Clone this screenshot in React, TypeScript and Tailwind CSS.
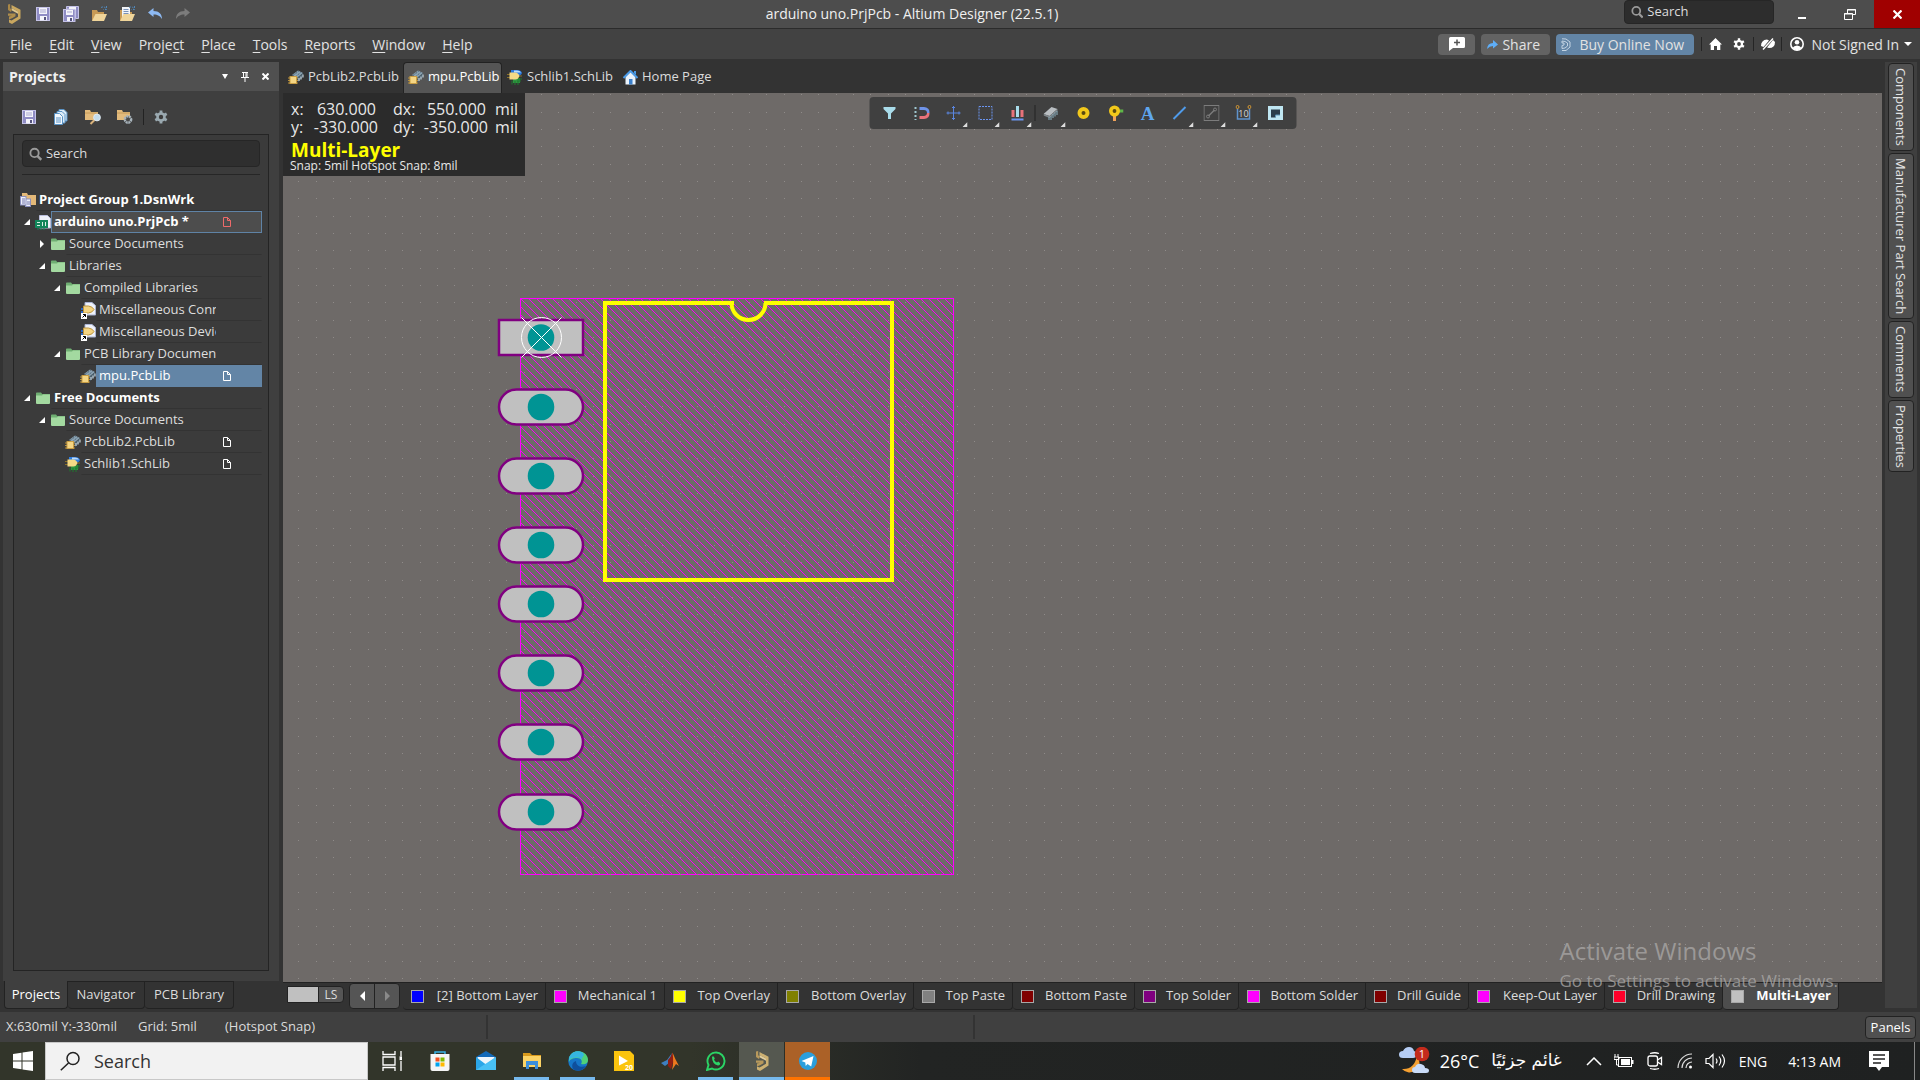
import React from "react";
import clsx from "clsx";

type P = { className?: string };

const AltiumLogo = ({ className }: P) => (
  <svg viewBox="0 0 14 20" className={className} fill="none">
    <path d="M1 .5 3.200 0v4.200L5 5.500 4 8 1 6z" fill="#a98747" />
    <path d="M4.500 1 13.500 5.800V14.500L5 20 2 18.500V15.500l2.500 1L11 12.800V7.500L4.500 4z" fill="#c9a75f" />
    <path d="M4.500 4 11 7.500v2.300L5 6.500z" fill="#dfc68d" />
    <path d="M1 9.500h7.500v2.800L5.500 14 2 15.500v-3l3-.8H1z" fill="#b08e4c" />
  </svg>
);
const Floppy = ({ className }: P) => (
  <svg viewBox="0 0 14 14" className={className}>
    <rect x=".5" y=".5" width="13" height="13" fill="#8f8cc4" stroke="#c4c2e6" />
    <rect x="3" y="1" width="8" height="6" fill="#f4f4fa" />
    <path d="M4 3h6M4 5h6" stroke="#a9a7cf" />
    <rect x="4" y="9" width="7" height="4.500" fill="#f4f4fa" />
    <rect x="8" y="10" width="2" height="3" fill="#55537c" />
  </svg>
);
const FloppyAll = ({ className }: P) => (
  <svg viewBox="0 0 16 16" className={className}>
    <path d="M3.500.5h12v12h-3V3h-9z" fill="#8f8cc4" stroke="#c4c2e6" />
    <path d="M6 1h7v3H6z" fill="#f4f4fa" />
    <rect x=".5" y="3.500" width="11.500" height="12" fill="#8f8cc4" stroke="#c4c2e6" />
    <rect x="3" y="4" width="7" height="5" fill="#f4f4fa" />
    <path d="M4 6h5" stroke="#a9a7cf" />
    <rect x="4" y="11" width="6" height="4" fill="#f4f4fa" />
    <rect x="7" y="12" width="2" height="3" fill="#55537c" />
  </svg>
);
const OpenFolder = ({ className, doc }: P & { doc?: boolean }) => (
  <svg viewBox="0 0 17 16" className={className}>
    <path d="M1 15V4h5l1 2h6v3" fill="#c89a55" />
    {doc && <path d="M3 1h8v10H3z" fill="#f2f4f8" />}
    {doc && <path d="M4.500 3.500h5M4.500 5.500h5M4.500 7.500h5" stroke="#7a92b8" />}
    <path d="M1 15 4.500 8H16l-3 7z" fill="#f0d59a" />
    <path d="M10 1.500q3-1.500 5 1M15.500 0v3.500h-3" fill="none" stroke="#4f86b8" strokeDasharray="2 1" />
  </svg>
);
const Undo = ({ className }: P) => (
  <svg viewBox="0 0 15 12" className={className}>
    <path d="M0 4.500 5.500 0V3C11 3 14 6 14 11 12 8 10 6.500 5.500 6.500V9z" fill="#8db9f2" />
  </svg>
);
const Redo = ({ className }: P) => (
  <svg viewBox="0 0 15 12" className={className}>
    <path d="M15 4.500 9.500 0V3C4 3 1 6 1 11 3 8 5 6.500 9.500 6.500V9z" fill="#7c7c7c" />
  </svg>
);
const DocsIcon = ({ className }: P) => (
  <svg viewBox="0 0 14 16" className={className}>
    <path d="M5 .5h5l3 3V12H5z" fill="#dcecf8" stroke="#5b94c6" />
    <path d="M3 2.500h5l3 3V14H3z" fill="#dcecf8" stroke="#5b94c6" />
    <path d="M.5 4.500h5l3 3V15.500h-8z" fill="#f3f8fd" stroke="#5b94c6" />
    <path d="M2 9h5M2 11h5M2 13h5" stroke="#5b94c6" />
  </svg>
);
const FolderTool = ({ className, gear }: P & { gear?: boolean }) => (
  <svg viewBox="0 0 16 16" className={className}>
    <path d="M0 1h5l1 2h7v8H0z" fill="#e3bb7c" />
    <path d="M0 4h13" stroke="#c59a58" />
    {gear ? (
      <circle cx="11" cy="10.500" r="3.200" fill="#4a4a4a" stroke="#a8b4bc" strokeWidth="2.400" strokeDasharray="2 .6" />
    ) : (
      <>
        <path d="m9.500 11-4 4" stroke="#d9b27b" strokeWidth="2" />
        <circle cx="12" cy="8.500" r="3.400" fill="#c4dcec" stroke="#dfeaf2" />
      </>
    )}
  </svg>
);
const Gear = ({ className, color = "#9aa9b0", hole = "#3c3c3c" }: P & { color?: string; hole?: string }) => (
  <svg viewBox="0 0 14 14" className={className}>
    <g stroke={color} strokeWidth="2.800">
      <path d="M7 .4v13.200M1.300 3.700l11.400 6.600M12.700 3.700 1.300 10.300" />
    </g>
    <circle cx="7" cy="7" r="4.800" fill={color} />
    <circle cx="7" cy="7" r="2.200" fill={hole} />
  </svg>
);
const Magnifier = ({ className, color = "#9a9a9a" }: P & { color?: string }) => (
  <svg viewBox="0 0 14 14" className={className} fill="none" stroke={color} strokeWidth="2">
    <circle cx="6" cy="5.800" r="4.500" />
    <path d="m9 9 4.300 4.300" strokeWidth="2.600" />
  </svg>
);
const PcbLib = ({ className }: P) => (
  <svg viewBox="0 0 16 14" className={className}>
    <path d="m4 5 6-4.500 5 2.500-6 5z" fill="#8ba3b3" />
    <path d="M5 5.500 11 1M7 7l6-4.800" stroke="#3f5564" strokeDasharray="1 1" />
    <path d="m9 8 6-5v4l-5 5z" fill="#4c6270" />
    <path d="M11 8v3M13 6.500v3M15 4.500v3" stroke="#dfe9ee" />
    <path d="M0 8h10M0 10.500h10M0 13h10" stroke="#b98e39" />
    <rect x="2" y="6.500" width="6.500" height="7" fill="#f4d583" stroke="#c89d44" />
  </svg>
);
const SchLib = ({ className }: P) => (
  <svg viewBox="0 0 16 16" className={className}>
    <path d="M4 1h6q4 0 5 3-1 3-5 3H4z" fill="#2c7be0" />
    <path d="M7 1.500h3q3 0 4 2H7z" fill="#b9dcff" />
    <rect x="6" y="9" width="7" height="5" fill="#2f9440" />
    <path d="M5 15.500v-4M8 16v-4M11 16v-4M14 12h-4M15 10h-4" stroke="#1f7a2f" />
    <path d="M0 5.500h4M0 8.500h4M10 7h5" stroke="#8b7128" />
    <path d="M2.500 3.500h6q2.500 0 4 3.500-1.500 3.500-4 3.500h-6z" fill="#f5da86" />
  </svg>
);
const HomeDoc = ({ className }: P) => (
  <svg viewBox="0 0 15 15" className={className}>
    <path d="M2.500 7v7.500h10V7L7.500 2z" fill="#e9f3fc" />
    <path d="M.5 8 7.500 1l7 7" fill="none" stroke="#4a9be8" strokeWidth="2" />
    <path d="M11 1h2v4l-2-2z" fill="#4a9be8" />
    <rect x="6" y="9" width="3.500" height="5.500" fill="#3a80cc" />
  </svg>
);
const Folder = ({ className }: P) => (
  <svg viewBox="0 0 14 12" className={className}>
    <path d="M0 2.500V1.200Q0 .5.800.5H5l1.200 1.500H14V4H0z" fill="#6fae72" />
    <path d="M0 3.500h6l1-1h7V11q0 1-1 1H1q-1 0-1-1z" fill="#a3d9a0" />
  </svg>
);
const GroupIcon = ({ className }: P) => (
  <svg viewBox="0 0 16 14" className={className}>
    <path d="M2 0h5l1 2h8v10H2z" fill="#e3b878" />
    <rect x="5.500" y="6" width="5" height="7.500" fill="#eef0fa" stroke="#8a8fbe" />
    <rect x=".5" y="3.500" width="5.500" height="8.500" fill="#eef0fa" stroke="#8a8fbe" />
    <path d="M2 6h3M2 8h3M2 10h3M7 9h3M7 11h3" stroke="#7478ad" />
  </svg>
);
const PrjIcon = ({ className }: P) => (
  <svg viewBox="0 0 16 15" className={className}>
    <path d="M4.500.5h8l3 3V13h-11z" fill="#eef0f8" stroke="#b9bddb" />
    <rect x="0" y="5" width="13" height="8" fill="#11865a" />
    <path d="M2 7.500h3M2 10.500h3M7.500 7v4M10.500 7v4" stroke="#d8f0e4" />
    <path d="M3 13v2M6 13v2M9 13v2" stroke="#11865a" />
  </svg>
);
const LinkLib = ({ className }: P) => (
  <svg viewBox="0 0 16 17" className={className}>
    <path d="M5 .5h7l3.500 3V13H5z" fill="#eef2fa" stroke="#aab4d4" />
    <path d="M1 7h3M1 10h3" stroke="#2c67c6" strokeWidth="2" />
    <path d="M3.500 4h5q4 .5 5.500 3.500-1.500 3-5.500 3.500h-5z" fill="#f4d583" stroke="#bd953f" />
    <rect x="1" y="11" width="6" height="6" fill="#fff" />
    <path d="m2.500 15.500 3-3M3 12.500h2.500V15" fill="none" stroke="#000" />
  </svg>
);
const PageMark = ({ className }: P) => (
  <svg viewBox="0 0 8 10" className={className} fill="none" stroke="currentColor">
    <path d="M.5.5h4l3 3v6h-7zM4.500.5v3h3" />
  </svg>
);

function Key({ text }: { text: string }) {
  const [a, k, b] = text.split("|");
  return (
    <>
      {a}
      <span className="underline underline-offset-2">{k}</span>
      {b}
    </>
  );
}

const menus = ["|F|ile", "|E|dit", "|V|iew", "Proje|c|t", "|P|lace", "|T|ools", "|R|eports", "|W|indow", "|H|elp"];

function TitleBar() {
  return (
    <header className="grid h-[29px] shrink-0 grid-cols-[1fr_auto_1fr] border-b border-[#2b2b2b] bg-[#4d4d4d]">
      <div className="flex items-center pl-[7px]">
        <AltiumLogo className="h-5 w-[14px]" />
        <button aria-label="Save" className="ml-[15px]"><Floppy className="size-[14px]" /></button>
        <button aria-label="Save all" className="ml-[13px]"><FloppyAll className="size-4" /></button>
        <button aria-label="Open" className="ml-3"><OpenFolder className="h-4 w-[17px]" /></button>
        <button aria-label="Open project" className="ml-[11px]"><OpenFolder doc className="h-4 w-[17px]" /></button>
        <button aria-label="Undo" className="ml-3"><Undo className="h-3 w-[15px]" /></button>
        <button aria-label="Redo" className="ml-3"><Redo className="h-3 w-[15px]" /></button>
      </div>
      <h1 className="mr-24 text-[14px] leading-7 text-[#f0f0f0]">arduino uno.PrjPcb - Altium Designer (22.5.1)</h1>
      <div className="flex items-start justify-end">
        <label className="mr-5 flex h-6 w-[150px] items-center gap-1 rounded border border-[#262626] bg-[#2d2d2d] px-1.5">
          <Magnifier className="size-[14px]" />
          <input aria-label="Search" placeholder="Search" className="w-full min-w-0 bg-transparent text-[13px] text-white outline-none placeholder:text-[#dcdcdc]" />
        </label>
        <button aria-label="Minimize" className="flex h-7 w-4 items-center justify-center"><span className="mt-2 h-0.5 w-2 bg-white" /></button>
        <button aria-label="Restore" className="ml-7 flex h-7 w-6 items-center justify-center">
          <svg viewBox="0 0 12 11" className="h-[11px] w-3" fill="none" stroke="#fff"><path d="M3.500 4V.5h8v5h-3M3 1h9" /><path d="M.5 4.500h8v6h-8zM0 5h9" /></svg>
        </button>
        <button aria-label="Close" className="ml-3 flex h-7 w-[46px] items-center justify-center bg-[#a00000]">
          <svg viewBox="0 0 9 9" className="size-[9px]" stroke="#fff" strokeWidth="2.200"><path d="m.5.5 8 8M8.500.5l-8 8" /></svg>
        </button>
      </div>
    </header>
  );
}

function MenuBar() {
  return (
    <div className="flex h-[30px] shrink-0 items-center justify-between bg-[#424242] text-[14px] text-[#e2e2e2]">
      <nav className="flex gap-[17px] pl-[10px]">
        {menus.map((m) => (
          <button key={m}><Key text={m} /></button>
        ))}
      </nav>
      <div className="flex items-center pr-2">
        <button aria-label="Feedback" className="flex h-[21px] w-[37px] items-center justify-center rounded-sm bg-[#636363]">
          <svg viewBox="0 0 16 14" className="h-[14px] w-4"><path d="M1.500 0h13q1.500 0 1.500 1.500v8q0 1.500-1.500 1.500H4l-4 3V1.500Q0 0 1.500 0z" fill="#fff" /><path d="M8 2.500v6M5 5.500h6" stroke="#555" strokeWidth="1.500" /></svg>
        </button>
        <button className="ml-1.5 flex h-[21px] w-[69px] items-center gap-1 rounded-sm bg-[#636363] pl-1.5">
          <svg viewBox="0 0 11 9" className="h-[9px] w-[11px]"><path d="M0 9q.5-6 6-6V0l5 4.500L6 8.500V6Q2.500 6 0 9z" fill="#5eaef8" /></svg>
          Share
        </button>
        <button className="ml-1.5 flex h-[21px] w-[138px] items-center gap-2 rounded-sm bg-[#6385a6] pl-[5px]">
          <svg viewBox="0 0 10 13" className="h-[13px] w-[10px]" fill="none" stroke="#c3d3e2"><path d="M1 .8 5 1l4 3v5l-4 3.500-4 0M1 3l3 .5L6.500 5v3L4 10l-3 .5V7.500L3 7V5H1z" /></svg>
          Buy Online Now
        </button>
        <span className="ml-[7px] h-[14px] w-px bg-[#252525]" />
        <button aria-label="Home" className="ml-[7px]"><svg viewBox="0 0 13 12" className="h-3 w-[13px]" fill="#fff"><path d="M6.500 0 13 6.500h-1.700V12H8V8H5v4H1.700V6.500H0z" /></svg></button>
        <button aria-label="Settings" className="ml-[11px]"><Gear className="size-3" color="#fff" hole="#424242" /></button>
        <span className="ml-2 h-[14px] w-px bg-[#252525]" />
        <button aria-label="Connection" className="ml-[7px]"><svg viewBox="0 0 14 12" className="h-3 w-[14px]"><path d="M0 8q0-6 6-6.500l2 1L2.500 9zM14 4q0 6-6 6l-2-.5L12 2z" fill="#fff" /><path d="m2 11.500 10-11" stroke="#fff" strokeWidth="1.400" /></svg></button>
        <span className="ml-1.5 h-[14px] w-px bg-[#252525]" />
        <button className="ml-2 flex items-center">
          <svg viewBox="0 0 14 14" className="mr-[7px] size-[14px]"><circle cx="7" cy="7" r="6.200" fill="none" stroke="#fff" strokeWidth="1.600" /><circle cx="7" cy="5.200" r="2.300" fill="#fff" /><path d="M2.500 11q1.500-2.500 4.500-2.500t4.500 2.500L7 13.500z" fill="#fff" /></svg>
          Not Signed In
          <span className="ml-[5px] border-x-4 border-t-4 border-x-transparent border-t-white" />
        </button>
      </div>
    </div>
  );
}

type Row = {
  text: string;
  level: number;
  icon: React.ReactNode;
  open?: boolean;
  shut?: boolean;
  bold?: boolean;
  mark?: string;
  state?: "project" | "selected";
};
const rows: Row[] = [
  { text: "Project Group 1.DsnWrk", level: 0, icon: <GroupIcon className="h-[14px] w-4" />, bold: true },
  { text: "arduino uno.PrjPcb *", level: 1, icon: <PrjIcon className="h-[15px] w-4" />, open: true, bold: true, mark: "text-[#ee6a6a]", state: "project" },
  { text: "Source Documents", level: 2, icon: <Folder className="h-3 w-[14px]" />, shut: true },
  { text: "Libraries", level: 2, icon: <Folder className="h-3 w-[14px]" />, open: true },
  { text: "Compiled Libraries", level: 3, icon: <Folder className="h-3 w-[14px]" />, open: true },
  { text: "Miscellaneous Connectors.IntLib", level: 4, icon: <LinkLib className="h-[17px] w-4" /> },
  { text: "Miscellaneous Devices.IntLib", level: 4, icon: <LinkLib className="h-[17px] w-4" /> },
  { text: "PCB Library Documents", level: 3, icon: <Folder className="h-3 w-[14px]" />, open: true },
  { text: "mpu.PcbLib", level: 4, icon: <PcbLib className="h-[14px] w-4" />, mark: "text-white", state: "selected" },
  { text: "Free Documents", level: 1, icon: <Folder className="h-3 w-[14px]" />, open: true, bold: true },
  { text: "Source Documents", level: 2, icon: <Folder className="h-3 w-[14px]" />, open: true },
  { text: "PcbLib2.PcbLib", level: 3, icon: <PcbLib className="h-[14px] w-4" />, mark: "text-white" },
  { text: "Schlib1.SchLib", level: 3, icon: <SchLib className="size-4" />, mark: "text-white" },
];
const indents = ["w-0", "w-[15px]", "w-[30px]", "w-[45px]", "w-[60px]"];

function Tree() {
  return (
    <ul role="tree" aria-label="Projects" className="mt-[14px] pr-1.5 text-[13px] text-[#dedede]">
      {rows.map((r, i) => (
        <li key={i} role="treeitem" aria-selected={r.state === "selected"} className="flex h-[22px] items-center">
          <span className={clsx("shrink-0", indents[r.level])} />
          <span className="flex w-[6px] shrink-0 justify-end">
            {(r.open || r.shut) && (
              <svg viewBox="0 0 6 8" className="-ml-4 mr-[5px] h-2 w-1.5 shrink-0" fill="#fff">
                {r.open ? <path d="M6 1v6H0z" /> : <path d="M1 0v8l4-4z" />}
              </svg>
            )}
          </span>
          <span className="flex w-4 shrink-0 justify-center">{r.icon}</span>
          <span
            className={clsx(
              "flex h-[22px] min-w-0 flex-1 items-center border",
              r.state === "project" && "border-[#5f83a6] bg-[#4d4d4d] text-white",
              r.state === "selected" && "border-[#6385a6] bg-[#6385a6] text-white",
              !r.state && "border-transparent border-b-[#333]",
              r.bold && "font-bold text-white",
            )}
          >
            <span className="min-w-0 flex-1 overflow-hidden pl-0.5 whitespace-nowrap">{r.text}</span>
            {r.level > 0 && (
              <span className={clsx("flex w-[45px] shrink-0 pl-[7px]", r.mark)}>{r.mark && <PageMark className="h-[10px] w-2" />}</span>
            )}
          </span>
        </li>
      ))}
    </ul>
  );
}

function ProjectsPanel() {
  return (
    <aside className="flex w-[283px] shrink-0 flex-col pt-[3px] pl-[3px]">
      <div className="mr-1 flex h-[29px] items-center bg-[#505050] pl-1.5 text-[14px] font-bold text-[#f0f0f0]">
        <h2 className="flex-1">Projects</h2>
        <button aria-label="Panel menu" className="border-x-[3px] border-t-[5px] border-x-transparent border-t-white" />
        <button aria-label="Pin" className="ml-[13px]"><svg viewBox="0 0 8 10" className="h-[10px] w-2" stroke="#fff" fill="none"><path d="M1 .5h6M2.500 0v5.500M5 0v5.500M6 0v5.500M0 5.500h8M4 5.500V10" /></svg></button>
        <button aria-label="Close panel" className="mr-[10px] ml-[13px]"><svg viewBox="0 0 7 7" className="size-[7px]" stroke="#fff" strokeWidth="2"><path d="m.5.5 6 6M6.500.5l-6 6" /></svg></button>
      </div>
      <div className="mr-1 flex min-h-0 flex-1 flex-col bg-[#3f3f3f] px-[10px] pb-[10px]">
        <div className="flex h-[43px] items-center pt-2 pl-[9px]">
          <button aria-label="Save"><Floppy className="size-[14px]" /></button>
          <button aria-label="Compile" className="ml-[18px]"><DocsIcon className="h-4 w-[14px]" /></button>
          <button aria-label="Explore" className="ml-[17px]"><FolderTool className="size-4" /></button>
          <button aria-label="Project options" className="ml-4"><FolderTool gear className="size-4" /></button>
          <span className="ml-[10px] h-4 w-px bg-[#222]" />
          <button aria-label="Settings" className="ml-[10px]"><Gear className="size-[14px]" /></button>
        </div>
        <div className="flex-1 border border-[#242424] bg-[#3b3b3b]">
          <div className="px-2 pt-[5px]">
            <label className="flex h-[27px] items-center gap-1 rounded border border-[#262626] bg-[#2f2f2f] px-1.5">
              <Magnifier className="size-[14px]" />
              <input aria-label="Search projects" placeholder="Search" className="w-full min-w-0 bg-transparent text-[13px] text-white outline-none placeholder:text-[#dcdcdc]" />
            </label>
            <div className="mt-[7px] h-px bg-[#262626]" />
          </div>
          <Tree />
        </div>
      </div>
      <div className="flex h-[31px] items-start pl-px text-[13px] text-[#dcdcdc]">
        <button className="h-7 w-16 rounded-b border border-t-0 border-[#222] bg-[#3f3f3f] text-white">Projects</button>
        <button className="h-7 w-[77px] rounded-b border border-l-0 border-[#222]">Navigator</button>
        <button className="h-7 w-[89px] rounded-b border border-l-0 border-[#222]">PCB Library</button>
      </div>
    </aside>
  );
}

function DocTabs() {
  const tab = "flex h-[31px] items-center gap-1 rounded-t border border-b-0 px-1 pb-0.5";
  return (
    <div role="tablist" className="flex h-[34px] shrink-0 items-end text-[13px] text-[#dcdcdc]">
      <button role="tab" className={clsx(tab, "w-[120px] border-transparent")}><PcbLib className="h-[14px] w-4 shrink-0" />PcbLib2.PcbLib</button>
      <button role="tab" aria-selected className={clsx(tab, "w-[99px] border-[#222] bg-[#555] text-white")}><PcbLib className="h-[14px] w-4 shrink-0" />mpu.PcbLib</button>
      <button role="tab" className={clsx(tab, "w-[116px] border-transparent")}><SchLib className="size-4 shrink-0" />Schlib1.SchLib</button>
      <button role="tab" className={clsx(tab, "border-transparent")}><HomeDoc className="size-[15px] shrink-0" />Home Page</button>
    </div>
  );
}

const tools: { name: string; corner?: boolean; art: React.ReactNode }[] = [
  { name: "Filter", art: <path d="M2 2h12v2L9.500 8.500V14h-3V8.500L2 4z" fill="#a9dcea" /> },
  { name: "Snap", art: <><path d="M6 3.500h4.500a4.500 4.500 0 0 1 4.500 4.500" fill="none" stroke="#6f93e8" strokeWidth="3" /><path d="M6 12.500h4.500A4.500 4.500 0 0 0 15 8" fill="none" stroke="#e8727a" strokeWidth="3" /><path d="M2 2v13" stroke="#9fc6cf" strokeWidth="2" strokeDasharray="2 2" /></> },
  { name: "Move", corner: true, art: <path d="M8 1v14M1 8h14M6.500 2.500h3M6.500 13.500h3M2.500 6.500v3M13.500 6.500v3" stroke="#5b86e0" /> },
  { name: "Select", corner: true, art: <rect x="1.500" y="1.500" width="13" height="13" fill="none" stroke="#6b95f0" strokeDasharray="2 1" /> },
  { name: "Align", corner: true, art: <><path d="M3.500 5v7M12.500 5v7" stroke="#e8727a" strokeWidth="3" /><path d="M8 1v11" stroke="#a9dcea" strokeWidth="3" /><path d="M2 14.500h12" stroke="#6b95f0" strokeWidth="2" /></> },
  { name: "Component", corner: true, art: <><path d="m0 9 8-7 6 2-8 7z" fill="#b9bec2" /><path d="m0 9 6 2 8-7v2l-8 7-6-2.500z" fill="#7f868b" /><path d="M5.500 12v3M7.500 11v4M9.500 9v4M11.500 7.500v4M13.500 6v4" stroke="#8fb4c4" /></> },
  { name: "Pad", art: <circle cx="8" cy="8" r="4" fill="#5a4a10" stroke="#f2c81b" strokeWidth="4" /> },
  { name: "Via", art: <><path d="M8 6h8" stroke="#5fb648" strokeWidth="3" /><path d="M7 8v8" stroke="#f0a35a" strokeWidth="3" /><circle cx="7" cy="6" r="3.700" fill="#5a4a10" stroke="#f2c81b" strokeWidth="3.600" /></> },
  { name: "String", art: <text x="8" y="14.500" textAnchor="middle" fontSize="19" fontWeight="700" fill="#5fa6ee" fontFamily="Liberation Serif, serif">A</text> },
  { name: "Line", corner: true, art: <path d="M2 14 14 2" stroke="#4f9bea" strokeWidth="2" /> },
  { name: "Room", corner: true, art: <><rect x=".5" y=".5" width="15" height="15" fill="none" stroke="#7c7c7c" /><path d="m5 11 6-6" stroke="#7c7c7c" strokeWidth="1.500" /><circle cx="4.500" cy="11.500" r="1.500" fill="none" stroke="#7c7c7c" /><circle cx="11.500" cy="4.500" r="1.500" fill="none" stroke="#7c7c7c" /></> },
  { name: "Dimension", corner: true, art: <><path d="M2 4v10h12V4" fill="none" stroke="#5f93cc" strokeWidth="1.500" /><circle cx="2" cy="2" r="1.500" fill="none" stroke="#d69a35" /><circle cx="14" cy="2" r="1.500" fill="none" stroke="#d69a35" /><text x="8" y="11.500" textAnchor="middle" fontSize="9" fill="#d8d8d8" fontFamily="Open Sans, sans-serif">10</text></> },
  { name: "Region", art: <><rect x=".5" y="1" width="15" height="14" fill="#bfe6f2" /><path d="M3.500 4.500h9v5.500H8v2.500H3.500z" fill="#2c3e4a" /><path d="M8 12.500V10h4.500" fill="none" stroke="#5f93b4" /></> },
];

function Toolbar() {
  return (
    <div role="toolbar" className="absolute top-1 left-1/2 flex h-8 w-[427px] -translate-x-1/2 items-center rounded bg-[#404040] pl-1">
      {tools.map((t, i) => (
        <button key={t.name} aria-label={t.name} className={clsx("relative flex h-8 w-8 shrink-0 items-center justify-center", i === 5 && "ml-0.5")}>
          <svg viewBox="0 0 16 16" className="size-4">{t.art}</svg>
          {t.corner && <svg viewBox="0 0 5 5" className="absolute right-0.5 bottom-0.5 size-[5px]"><path d="M5 0v5H0z" fill="#ddd" /></svg>}
          {i === 5 && <span className="absolute -left-px h-4 w-px bg-[#222]" />}
        </button>
      ))}
    </div>
  );
}

const pads = [407, 476, 545, 604, 673, 742, 812];

function PcbDrawing() {
  return (
    <svg className="absolute inset-0 h-full w-full" role="img" aria-label="Footprint">
      <defs>
        <pattern id="grid" patternUnits="userSpaceOnUse" x="206" y="192" width="52" height="52">
          <g fill="#8f8b89">
            {[0, 17, 35].map((x) => [0, 17, 35].map((y) => <rect key={`${x}-${y}`} x={x} y={y} width="1" height="1" />))}
          </g>
        </pattern>
        <pattern id="hatch" patternUnits="userSpaceOnUse" x="237" y="205" width="8" height="8">
          <g fill="#f800f8" shapeRendering="crispEdges">
            {[0, 1, 2, 3, 4, 5, 6, 7].map((n) => (
              <rect key={n} x={n} y={n} width="1" height="1" />
            ))}
          </g>
        </pattern>
      </defs>
      <g transform="translate(-283 -93)">
        <rect x="520.500" y="298.500" width="433" height="576" fill="none" stroke="#ff00ff" />
      </g>
      <rect x="237" y="205" width="434" height="577" fill="url(#hatch)" />
      <rect width="100%" height="100%" fill="url(#grid)" />
      <g transform="translate(-283 -93)">
        <path d="M732 303H605V580H892V303H766" fill="none" stroke="#ffff00" strokeWidth="4" strokeLinecap="square" />
        <path d="M731.500 303a17 17 0 0 0 34 0" fill="none" stroke="#ffff00" strokeWidth="4" />
        <rect x="499" y="320" width="84" height="35" fill="#c0c0c0" stroke="#800080" strokeWidth="2.500" />
        <circle cx="541" cy="337.500" r="13.300" fill="#009494" />
        {pads.map((y) => (
          <g key={y}>
            <rect x="499" y={y - 17.5} width="84" height="35" rx="17.500" fill="#c0c0c0" stroke="#800080" strokeWidth="2.500" />
            <circle cx="541" cy={y} r="13.300" fill="#009494" />
          </g>
        ))}
        <g fill="none" stroke="#fff">
          <circle cx="541.500" cy="337.500" r="20" />
          <path d="m521.500 317.500 40 40M561.500 317.500l-40 40" />
        </g>
      </g>
    </svg>
  );
}

function Hud() {
  return (
    <div className="absolute top-0 left-0 h-[83px] w-[242px] bg-[#2b2b2b] pt-[7px] pl-2 text-[16px] text-[#e8e8e8]">
      <div className="grid w-[227px] grid-cols-[18px_69px_32px_78px_1fr] leading-[18px]">
        <span>x:</span><span className="pr-0.5 text-right">630.000</span><span className="pl-[15px]">dx:</span><span className="pr-0.5 text-right">550.000</span><span className="text-right">mil</span>
        <span>y:</span><span className="text-right">-330.000</span><span className="pl-[15px]">dy:</span><span className="text-right">-350.000</span><span className="text-right">mil</span>
      </div>
      <p className="mt-1 text-[19px] leading-5 font-bold text-[#ffff00]">Multi-Layer</p>
      <p className="-ml-px text-[12px] leading-3">Snap: 5mil Hotspot Snap: 8mil</p>
    </div>
  );
}

const layers = [
  ["[2] Bottom Layer", "bg-[#0000ff]", "w-[143px]"],
  ["Mechanical 1", "bg-[#ff00ff]", "w-[119px]"],
  ["Top Overlay", "bg-[#ffff00]", "w-[113px]"],
  ["Bottom Overlay", "bg-[#808000]", "w-[136px]"],
  ["Top Paste", "bg-[#808080]", "w-[99px]"],
  ["Bottom Paste", "bg-[#800000]", "w-[122px]"],
  ["Top Solder", "bg-[#800080]", "w-[104px]"],
  ["Bottom Solder", "bg-[#ff00ff]", "w-[127px]"],
  ["Drill Guide", "bg-[#800000]", "w-[103px]"],
  ["Keep-Out Layer", "bg-[#ff00ff]", "w-[136px]"],
  ["Drill Drawing", "bg-[#ff002a]", "w-[118px]"],
  ["Multi-Layer", "bg-[#c0c0c0]", "w-[116px]"],
];

function LayerBar() {
  return (
    <div className="flex h-[30px] shrink-0 items-start border-t border-[#222] pl-1 text-[13px] text-[#dcdcdc]">
      <button className="mt-[3px] flex h-[17px] w-[57px] items-stretch rounded-r-sm border border-[#222] bg-[#555] leading-[15px]">
        <span className="w-[31px] border-r border-[#222] bg-[#c0c0c0]" />
        <span className="flex-1 text-[12px]">LS</span>
      </button>
      <div className="ml-[5px] flex h-[26px] w-[51px] rounded-sm border border-[#222] bg-[#555]">
        <button aria-label="Previous layers" className="flex flex-1 items-center justify-center border-r border-[#222]"><span className="border-y-[5px] border-r-[5px] border-y-transparent border-r-white" /></button>
        <button aria-label="Next layers" className="flex flex-1 items-center justify-center"><span className="border-y-[5px] border-l-[5px] border-y-transparent border-l-[#8a8a8a]" /></button>
      </div>
      <div role="tablist" aria-label="Layers" className="ml-[3px] flex min-w-0">
        {layers.map(([name, color, width], i) => (
          <button
            key={name}
            role="tab"
            className={clsx(
              "flex h-[27px] items-center rounded-b border border-t-0 border-l-0 border-[#222] pr-[7px] pl-2 whitespace-nowrap",
              width,
              i === 11 && "bg-[#4d4d4d] font-bold text-white",
            )}
          >
            <span className={clsx("size-[13px] shrink-0 border border-[#a8a8a8]", color)} />
            <span className="flex-1 text-right">{name}</span>
          </button>
        ))}
      </div>
    </div>
  );
}

const sideTabs = [
  ["Components", "h-[88px]"],
  ["Manufacturer Part Search", "h-[166px]"],
  ["Comments", "h-[77px]"],
  ["Properties", "h-[72px]"],
];

function SideTabs() {
  return (
    <div className="w-[38px] shrink-0 pt-[3px] pr-[3px] pb-1 pl-[3px]">
      <div className="flex h-full flex-col gap-0.5 bg-[#3f3f3f] pt-px pl-[3px] text-[13px] text-[#e4e4e4]">
        {sideTabs.map(([name, h]) => (
          <button key={name} className={clsx("flex w-[26px] shrink-0 items-center justify-center rounded border border-[#222] bg-[#505050]", h)}>
            <span className="leading-4 whitespace-nowrap [writing-mode:vertical-rl]">{name}</span>
          </button>
        ))}
      </div>
    </div>
  );
}

function StatusBar() {
  return (
    <footer className="flex h-[30px] shrink-0 items-center bg-[#404040] pr-1 pl-1.5 text-[13px] text-[#dcdcdc]">
      <span className="w-[132px]">X:630mil Y:-330mil</span>
      <span className="w-[87px]">Grid: 5mil</span>
      <span className="w-[261px]">(Hotspot Snap)</span>
      <span className="h-6 w-0.5 bg-[#333]" />
      <span className="ml-[485px] h-6 w-0.5 bg-[#333]" />
      <button className="ml-auto h-[23px] w-[51px] rounded border border-[#222] bg-[#505050] leading-none text-white">Panels</button>
    </footer>
  );
}

const apps: { name: string; cell?: string; bar?: string; art: React.ReactNode }[] = [
  { name: "Task view", cell: "pr-1", art: <g fill="none" stroke="#fff" strokeWidth="1.300"><path d="M1 0v3.500h12V0M1 20v-3.500h12V20M1 6h12v8H1zM19 0v5M19 10v10" /><rect x="18.200" y="6" width="1.600" height="2.500" fill="#fff" /></g> },
  { name: "Store", art: <><path d="M5 4V1h10v3" fill="none" stroke="#39b3e6" strokeWidth="1.500" /><path d="M.5 3h19v15q0 2-2 2h-15q-2 0-2-2z" fill="#f5f5f5" /><rect x="5.500" y="6.500" width="4" height="4" fill="#f25022" /><rect x="10.500" y="6.500" width="4" height="4" fill="#7fba00" /><rect x="5.500" y="11.500" width="4" height="4" fill="#00a4ef" /><rect x="10.500" y="11.500" width="4" height="4" fill="#ffb900" /></> },
  { name: "Mail", art: <><path d="M0 6 10 0l10 6v13H0z" fill="#1269b8" /><path d="M1.500 6h17v7h-17z" fill="#eef6fc" /><path d="M0 6l10 7.500L20 6v13H0z" fill="#2ba6e8" /><path d="m0 19 20-13v13z" fill="#48c0f5" /></> },
  { name: "File Explorer", bar: "bg-[#76b9ed] w-[35px]", art: <><path d="M1 2h7l2 2h9v4H1z" fill="#d99a1c" /><path d="M1 5h18v11H1z" fill="#fcd365" /><path d="M4 18v-8h12v8h-3v-4H7v4z" fill="#3d8fdb" /></> },
  { name: "Edge", bar: "bg-[#76b9ed] w-[35px]", art: <><circle cx="10" cy="10" r="9.800" fill="#1676c8" /><path d="M1 7C3 1 8 0 11 .3 17 1 20 5 20 9c0 4-4 5-7 4 2-3 0-6-4-6-4 0-7 1-8 4z" fill="#4fd27a" /><path d="M1 7C3 1 8 0 11 .3c3 .3 4.500 1.500 5 3.700-1 1-2 3-2.500 5-1-2-3-2.500-5-2.500-4 0-6 1-7.300 3z" fill="#36b5e0" /><path d="M8 10c0 5 5 7 10 5-3 5-9 6-13 3 -2-4 0-7 3-8z" fill="#0f4f9c" /></> },
  { name: "Player", art: <><path d="M0 0h16l4 4v16H0z" fill="#fbc40e" /><path d="M5 4.500v10L14 10z" fill="#fff" /><text x="11" y="18.500" fontSize="7" fontWeight="700" fill="#fff" fontFamily="Open Sans, sans-serif">20</text></> },
  { name: "MATLAB", art: <><path d="m1 12 6-3 5-7-3 10-4 3z" fill="#3f7fc0" /><path d="M8 9q3-3 4.500-7.500L14 8l-3 10-3-3z" fill="#8f1f14" /><path d="M12.500 1.500Q15 8 19 15l-3-2-4 6q2-8 .5-17.500z" fill="#ee7a1f" /></> },
  { name: "WhatsApp", bar: "bg-[#76b9ed] w-[35px]", art: <><path d="M1 19l1.500-5A8.500 8.500 0 1 1 6 17.500z" fill="none" stroke="#2bd566" strokeWidth="1.900" /><path d="M6 6q1-1.500 2 0l.8 1.500-.8 1.200q1 2 3 2.800l1.200-1L14 12q.5 2-2 2.500Q6 13 6 6z" fill="#2bd566" /></> },
  { name: "Altium Designer", cell: "bg-[#555850]", bar: "bg-[#76b9ed] w-full", art: <g transform="translate(3 0)"><path d="M1 .5 3.200 0v4.200L5 5.500 4 8 1 6z" fill="#b8995c" /><path d="M4.500 1 13.500 5.800V14.500L5 20 2 18.500V15.500l2.500 1L11 12.800V7.500L4.500 4z" fill="#cdb172" /><path d="M4.500 4 11 7.500v2.300L5 6.500z" fill="#e3cf9e" /><path d="M1 9.500h7.500v2.800L5.500 14 2 15.500v-3l3-.8H1z" fill="#b8995c" /></g> },
  { name: "Telegram", cell: "bg-[#ab6127]", bar: "bg-[#ff7300] w-full", art: <><circle cx="10" cy="10" r="9" fill="#2a9fdc" /><path d="m3.500 10 12-5-2.300 10.500L9.500 13l-1.800 2-.4-3.500z" fill="#fff" /></> },
];

function Taskbar() {
  return (
    <div className="flex h-[38px] shrink-0 items-center bg-[linear-gradient(90deg,#32352a_0,#32352a_36%,#222423_48%,#1f2121_100%)] text-white">
      <button aria-label="Start" className="flex w-[45px] justify-center">
        <svg viewBox="0 0 20 20" className="size-5" fill="#fff"><path d="M0 3l8.500-1.300v7.800H0zM9.500 1.500 20 0v9.500H9.500zM0 10.500h8.500v7.800L0 17zM9.500 10.500H20V20L9.500 18.500z" /></svg>
      </button>
      <label className="flex h-full w-[323px] items-center gap-[14px] border border-[#c8c8c8] bg-[#f2f2f2] pl-[14px]">
        <svg viewBox="0 0 20 20" className="size-5" fill="none" stroke="#222" strokeWidth="1.500"><circle cx="13" cy="7.500" r="6" /><path d="M8.500 12 .8 19.300" /></svg>
        <input aria-label="Search Windows" placeholder="Search" className="w-40 bg-transparent text-[18px] text-black outline-none placeholder:text-[#333]" />
      </label>
      <nav aria-label="Applications" className="flex h-full pl-[3px]">
        {apps.map((a) => (
          <button key={a.name} aria-label={a.name} className={clsx("relative flex w-[46px] items-center justify-center border-r border-transparent bg-clip-padding", a.cell)}>
            <svg viewBox="0 0 20 20" className="size-5">{a.art}</svg>
            {a.bar && <span className={clsx("absolute bottom-0 h-[3px]", a.bar)} />}
          </button>
        ))}
      </nav>
      <div className="ml-auto flex h-full items-center text-[14px]">
        <button className="mr-[24px] flex items-center text-[18px]">
          <svg viewBox="0 0 31 28" className="mr-[10px] h-7 w-[31px]">
            <path d="M18 9a9 9 0 1 1-15 13q12 1 15-13z" fill="#f5a031" />
            <path d="M4 11q-4 0-4-3.500T4 4q2-4 6-4t5 4q4 1 3 4t-4 3z" fill="#b5cdf5" />
            <path d="M16 26q-3 0-3-3t3-3q2-4 6-3t4 4q4 0 4 2.500T27 26z" fill="#c9dbf8" />
            <circle cx="23" cy="7" r="7.300" fill="#c42b1c" />
            <text x="23" y="11" fontSize="11" textAnchor="middle" fill="#fff" fontFamily="Open Sans, sans-serif">1</text>
          </svg>
          26°C<span dir="rtl" className="ml-3 font-['DejaVu_Sans',sans-serif] text-[17px]">غائم جزئيًا</span>
        </button>
        <button aria-label="Hidden icons" className="mr-3"><svg viewBox="0 0 16 9" className="h-[9px] w-4" fill="none" stroke="#fff" strokeWidth="1.500"><path d="m1 8 7-7 7 7" /></svg></button>
        <svg viewBox="0 0 20 14" className="mr-[13px] h-[14px] w-5" fill="none" stroke="#fff"><rect x="4.500" y="3.500" width="13" height="9" /><rect x="7" y="5" width="9" height="6" fill="#fff" stroke="none" /><path d="M18.500 6v4" strokeWidth="2" /><path d="M1 0v3M4 0v3M0 3h5v2.500H0zM2.500 5v6H4" /></svg>
        <svg viewBox="0 0 16 18" className="mr-[14px] h-[18px] w-4" fill="none" stroke="#fff" strokeWidth="1.300"><rect x="1" y="4" width="9.500" height="10" rx="2" /><path d="m10.500 8 4-2.500v7l-4-2.500M3 1.500q5-1.500 9 0M3 16.500q5 1.500 9 0" /></svg>
        <svg viewBox="0 0 16 16" className="mr-3 size-4" fill="none" stroke="#ddd" strokeWidth="1.200"><path d="M1 15A14 14 0 0 1 15 1M5 15A10 10 0 0 1 15 5M9 15a6 6 0 0 1 6-6" /><circle cx="13.500" cy="14" r="1.500" fill="#fff" stroke="none" /></svg>
        <svg viewBox="0 0 22 16" className="mr-3 h-4 w-[22px]" fill="none" stroke="#fff" strokeWidth="1.200"><path d="M1 5.500h3l4-4v13l-4-4H1zM11 5.500q2 2.500 0 5M14 3.500q3.500 4.500 0 9M17 1.500q5 6.500 0 13" /></svg>
        <span className="mr-[21px] text-[14px]">ENG</span>
        <time className="mr-7 text-[14px]">4:13 AM</time>
        <button aria-label="Notifications" className="mr-[25px]"><svg viewBox="0 0 20 20" className="size-5"><path d="M0 0h20v16h-7l-3 4-3-4H0z" fill="#fff" /><path d="M4 4h12M4 8h12M4 12h8" stroke="#222" strokeWidth="1.300" /></svg></button>
        <span className="mr-[5px] h-full w-px bg-[#888]" />
      </div>
    </div>
  );
}

export default function App() {
  return (
    <div className="flex h-screen flex-col overflow-hidden bg-[#333] font-['Open_Sans','Noto_Sans',sans-serif]">
      <TitleBar />
      <MenuBar />
      <main className="flex min-h-0 flex-1">
        <ProjectsPanel />
        <section className="relative flex min-w-0 flex-1 flex-col">
          <DocTabs />
          <div className="relative flex-1 overflow-hidden bg-[#6e6a68]">
            <PcbDrawing />
            <Hud />
            <Toolbar />
          </div>
          <LayerBar />
          <div className="pointer-events-none absolute right-[44px] bottom-[17px] text-[#a8a6a5]/80">
            <p className="text-[24px] leading-8">Activate Windows</p>
            <p className="text-[17px] leading-7">Go to Settings to activate Windows.</p>
          </div>
        </section>
        <SideTabs />
      </main>
      <StatusBar />
      <Taskbar />
    </div>
  );
}
